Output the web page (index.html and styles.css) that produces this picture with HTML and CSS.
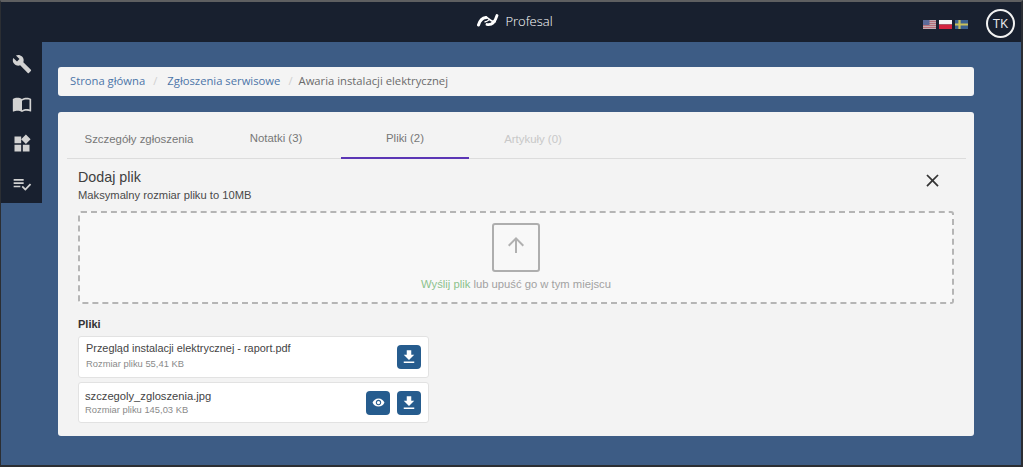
FILE: index.html
```html
<!DOCTYPE html>
<html lang="pl">
<head>
<meta charset="utf-8">
<title>Profesal</title>
<link rel="stylesheet" href="styles.css">
</head>
<body>
<div class="window">
  <header class="topbar">
    <div class="brand">
      <svg class="brand-logo" viewBox="0 0 22 13"><path d="M1.500 11C2.500 7.500 5 4 9 3.500" fill="none" stroke="#fff" stroke-width="3" stroke-linecap="round"/><path d="M8 3.300C11 3.300 12.500 5.500 14 6.500S17 8 19 7.500" fill="none" stroke="#fff" stroke-width="1.600"/><path d="M10 10.500C15 11.500 18 8 20 1.500" fill="none" stroke="#fff" stroke-width="2.800" stroke-linecap="round"/><path d="M7.500 8C9.500 7.800 11 6.800 12.500 5.500" fill="none" stroke="#fff" stroke-width="1.300"/></svg>
      <span class="brand-name">Profesal</span>
    </div>
    <div class="top-right">
      <div class="flags">
        <svg class="flag" viewBox="0 0 13 9"><rect width="13" height="9" fill="#c4aab2"/><path d="M0 1.500h13M0 3.500h13M0 5.500h13M0 7.500h13" stroke="#b3606a" stroke-width=".8"/><rect width="6.500" height="5" fill="#5b6a9a"/></svg>
        <svg class="flag" viewBox="0 0 13 9"><rect width="13" height="4.500" fill="#f4f4f4"/><rect y="4.500" width="13" height="4.500" fill="#d3233f"/></svg>
        <svg class="flag" viewBox="0 0 13 9"><rect width="13" height="9" fill="#3c6190"/><path d="M0 4.500h13M4.500 0v9" stroke="#c9c05a" stroke-width="2.200"/></svg>
      </div>
      <div class="avatar">TK</div>
    </div>
  </header>
  <div class="body-row">
    <nav class="sidebar">
      <svg class="side-icon" viewBox="0 0 24 24"><path d="M22.700 19l-9.100-9.100c.9-2.300.4-5-1.500-6.900-2-2-5-2.400-7.400-1.300L9 6 6 9 1.600 4.700C.4 7.100.9 10.100 2.900 12.100c1.900 1.900 4.600 2.400 6.900 1.500l9.100 9.100c.4.4 1 .4 1.400 0l2.300-2.300c.5-.4.5-1.100.1-1.400z"/></svg>
      <svg class="side-icon" viewBox="0 0 24 24"><path d="M21 5c-1.110-.35-2.330-.5-3.500-.5-1.950 0-4.050.4-5.500 1.500-1.450-1.100-3.550-1.500-5.500-1.500S2.450 4.900 1 6v14.650c0 .25.25.5.5.5.1 0 .15-.05.25-.05C3.100 20.450 5.050 20 6.500 20c1.950 0 4.050.4 5.500 1.500 1.350-.85 3.800-1.500 5.500-1.500 1.650 0 3.350.3 4.750 1.050.1.05.15.05.25.05.25 0 .5-.25.5-.5V6c-.6-.45-1.250-.75-2-1zm0 13.500c-1.100-.35-2.300-.5-3.500-.5-1.700 0-4.150.65-5.500 1.500V8c1.350-.85 3.800-1.500 5.500-1.500 1.200 0 2.400.15 3.500.5v11.500z"/></svg>
      <svg class="side-icon" viewBox="0 0 24 24"><path d="M13 13v8h8v-8h-8zM3 21h8v-8H3v8zM3 3v8h8V3H3zm13.660-2.340L11 6.340 16.660 12l5.660-5.660-5.660-5.660z"/></svg>
      <svg class="side-icon" viewBox="0 0 24 24"><path d="M14 10H2v2h12v-2zm0-4H2v2h12V6zM2 16h8v-2H2v2zm19.500-4.500L23 13l-6.990 7-4.510-4.500L13 14l3.010 3 5.490-5.500z"/></svg>
    </nav>
    <main class="main">
      <ol class="breadcrumb">
        <li class="crumb-link">Strona główna</li>
        <li class="crumb-sep crumb-sep-first">/</li>
        <li class="crumb-link">Zgłoszenia serwisowe</li>
        <li class="crumb-sep crumb-sep-last">/</li>
        <li class="crumb-current">Awaria instalacji elektrycznej</li>
      </ol>
      <section class="card">
        <div class="tabs">
          <div class="tab tab-first">Szczegóły zgłoszenia</div>
          <div class="tab tab-second">Notatki (3)</div>
          <div class="tab tab-active">Pliki (2)</div>
          <div class="tab tab-disabled">Artykuły (0)</div>
        </div>
        <div class="panel">
          <div class="panel-head">
            <div>
              <h2 class="panel-title">Dodaj plik</h2>
              <p class="panel-sub">Maksymalny rozmiar pliku to 10MB</p>
            </div>
            <svg class="close" viewBox="0 0 24 24"><path d="M19 6.410L17.590 5 12 10.590 6.410 5 5 6.410 10.590 12 5 17.590 6.410 19 12 13.410 17.590 19 19 17.590 13.410 12z"/></svg>
          </div>
          <div class="dropzone">
            <div class="drop-box">
              <svg class="drop-arrow" viewBox="0 0 24 24"><path d="M4 12l1.410 1.410L11 7.830V20h2V7.830l5.580 5.590L20 12l-8-8-8 8z"/></svg>
            </div>
            <div class="drop-text"><span class="drop-link">Wyślij plik</span> lub upuść go w tym miejscu</div>
          </div>
          <h3 class="files-title">Pliki</h3>
          <div class="file-list">
            <div class="file file-a">
              <div class="file-info">
                <div class="file-name">Przegląd instalacji elektrycznej - raport.pdf</div>
                <div class="file-size file-size-a">Rozmiar pliku 55,41 KB</div>
              </div>
              <button class="icon-btn"><svg class="icon-down" viewBox="0 0 24 24"><path d="M19 9h-4V3H9v6H5l7 7 7-7zM5 18v2h14v-2H5z"/></svg></button>
            </div>
            <div class="file file-b">
              <div class="file-info">
                <div class="file-name">szczegoly_zgloszenia.jpg</div>
                <div class="file-size">Rozmiar pliku 145,03 KB</div>
              </div>
              <button class="icon-btn"><svg class="icon-eye" viewBox="0 0 24 24"><path d="M12 4.500C7 4.500 2.730 7.610 1 12c1.730 4.390 6 7.500 11 7.500s9.270-3.110 11-7.500c-1.730-4.390-6-7.500-11-7.500zM12 17c-2.760 0-5-2.240-5-5s2.240-5 5-5 5 2.240 5 5-2.240 5-5 5zm0-8c-1.660 0-3 1.340-3 3s1.340 3 3 3 3-1.340 3-3-1.340-3-3-3z"/></svg></button>
              <button class="icon-btn"><svg class="icon-down" viewBox="0 0 24 24"><path d="M19 9h-4V3H9v6H5l7 7 7-7zM5 18v2h14v-2H5z"/></svg></button>
            </div>
          </div>
        </div>
      </section>
    </main>
  </div>
</div>
</body>
</html>
```
FILE: styles.css
```css
* { box-sizing: border-box; }
html, body { margin: 0; padding: 0; height: 100%; overflow: hidden; }
body { font-family: "Liberation Sans", Arial, sans-serif; color: #3a3a3a; background: #3d5c85; }

.window {
  width: 1023px; height: 467px;
  display: flex; flex-direction: column;
  border-top: 2px solid #5e5f61;
  border-left: 1px solid #2b2e33;
  border-right: 2px solid #2b2e33;
  border-bottom: 2px solid #2b2e33;
  background: #3d5c85;
}

.topbar {
  height: 40px; flex: none;
  background: #18202f;
  display: flex; align-items: center; justify-content: center;
  position: relative;
}
.brand { display: flex; align-items: center; gap: 6px; margin-top: -3px; margin-left: 8px; }
.brand-logo { width: 22px; height: 13px; display: block; }
.brand-name { font-family: "Open Sans", sans-serif; font-size: 13px; font-weight: 300; color: #fff; }

.top-right {
  position: absolute; right: 6px; top: 7px;
  display: flex; align-items: center; gap: 18px;
}
.flags { display: flex; gap: 3px; margin-top: 1px; }
.flag { width: 13px; height: 9px; display: block; }
.avatar {
  width: 29px; height: 29px; border-radius: 50%;
  border: 2px solid #f2f2f2; color: #e8e8ea;
  font-size: 12px;
  display: flex; align-items: center; justify-content: center;
}

.body-row { flex: 1; display: flex; align-items: flex-start; min-height: 0; }

.sidebar {
  width: 41px; height: 161px; flex: none;
  background: #18202f;
  display: flex; flex-direction: column; align-items: center;
  padding-top: 12px; gap: 20px;
}
.side-icon { width: 20px; height: 20px; fill: #d2d2d2; display: block; }

.main { flex: 1; padding: 25px 47px 0 16px; }

.breadcrumb {
  list-style: none; margin: 0 0 16px; padding: 0 12px 2px;
  height: 29px; border-radius: 3px; background: #f4f4f4;
  display: flex; align-items: center; gap: 8px;
  font-family: "Open Sans", sans-serif; font-size: 11.250px;
}
.crumb-link { color: #4c74a8; }
.crumb-sep { color: #d0d0d0; }
.crumb-sep-first { margin-right: 2px; }
.crumb-sep-last { margin-right: -2px; }
.crumb-current { color: #6b6b6b; }

.card {
  height: 324px; border-radius: 3px; background: #f3f3f3;
  padding: 0 8px 0 9px;
}

.tabs {
  height: 47px; display: flex;
  border-bottom: 1px solid #dcdcdc;
  font-size: 11.400px; color: #777;
}
.tab { display: flex; align-items: center; justify-content: center; padding-top: 10px; padding-bottom: 2px; }
.tab-first { width: 144px; }
.tab-second { width: 130px; padding-top: 8px; }
.tab-active { width: 128px; border-bottom: 2px solid #5b36b5; margin-bottom: -1px; padding-bottom: 3px; }
.tab-disabled { width: 128px; color: #c8c8c8; }

.panel { padding: 0 12px 0 11px; }
.panel-head { height: 52px; display: flex; justify-content: space-between; align-items: flex-start; padding-top: 9px; }
.panel-title { margin: 0; font-size: 14.300px; font-weight: 400; line-height: 18px; color: #404040; }
.panel-sub { margin: 2px 0 0; font-size: 11.200px; line-height: 14px; color: #4a4a4a; }
.close { width: 21px; height: 21px; fill: #333; margin-top: 2px; margin-right: 11px; }

.dropzone {
  height: 93px; border: 2px dashed #b5b5b5; border-radius: 3px;
  background: #f8f8f8;
  display: flex; flex-direction: column; align-items: center; padding-top: 10px;
}
.drop-box {
  width: 48px; height: 49px; border: 2px solid #aeaeae; border-radius: 3px;
  display: flex; align-items: center; justify-content: center;
}
.drop-arrow { width: 24px; height: 24px; fill: #b0b0b0; margin-top: -6px; }
.drop-text { margin-top: 5px; font-size: 11.250px; line-height: 14px; color: #a2a2a2; }
.drop-link { color: #8cc28c; }

.files-title { margin: 14px 0 5px; font-size: 11px; line-height: 13px; font-weight: 700; color: #333; }

.file-list { width: 351px; display: flex; flex-direction: column; gap: 4px; }
.file {
  background: #fff; border: 1px solid #e2e2e2; border-radius: 3px;
  display: flex; align-items: center; gap: 7px; padding-right: 7px;
}
.file-a { height: 42px; padding-left: 7px; }
.file-b { height: 41px; padding-left: 6px; }
.file-info { flex: 1; min-width: 0; }
.file-name { font-size: 11.200px; line-height: 14px; color: #444; }
.file-size { font-size: 9.400px; line-height: 12px; color: #8a8a8a; margin-top: 1px; }
.file-size-a { margin-top: 3px; }
.file-a .file-name { margin-top: -4px; font-size: 10.900px; }

.icon-btn {
  width: 24px; height: 24px; padding: 0; border: 0; border-radius: 4px;
  background: #265c8e;
  display: flex; align-items: center; justify-content: center;
}
.icon-down { width: 18px; height: 18px; fill: #fff; display: block; }
.icon-eye { width: 13px; height: 13px; fill: #fff; display: block; }
```
